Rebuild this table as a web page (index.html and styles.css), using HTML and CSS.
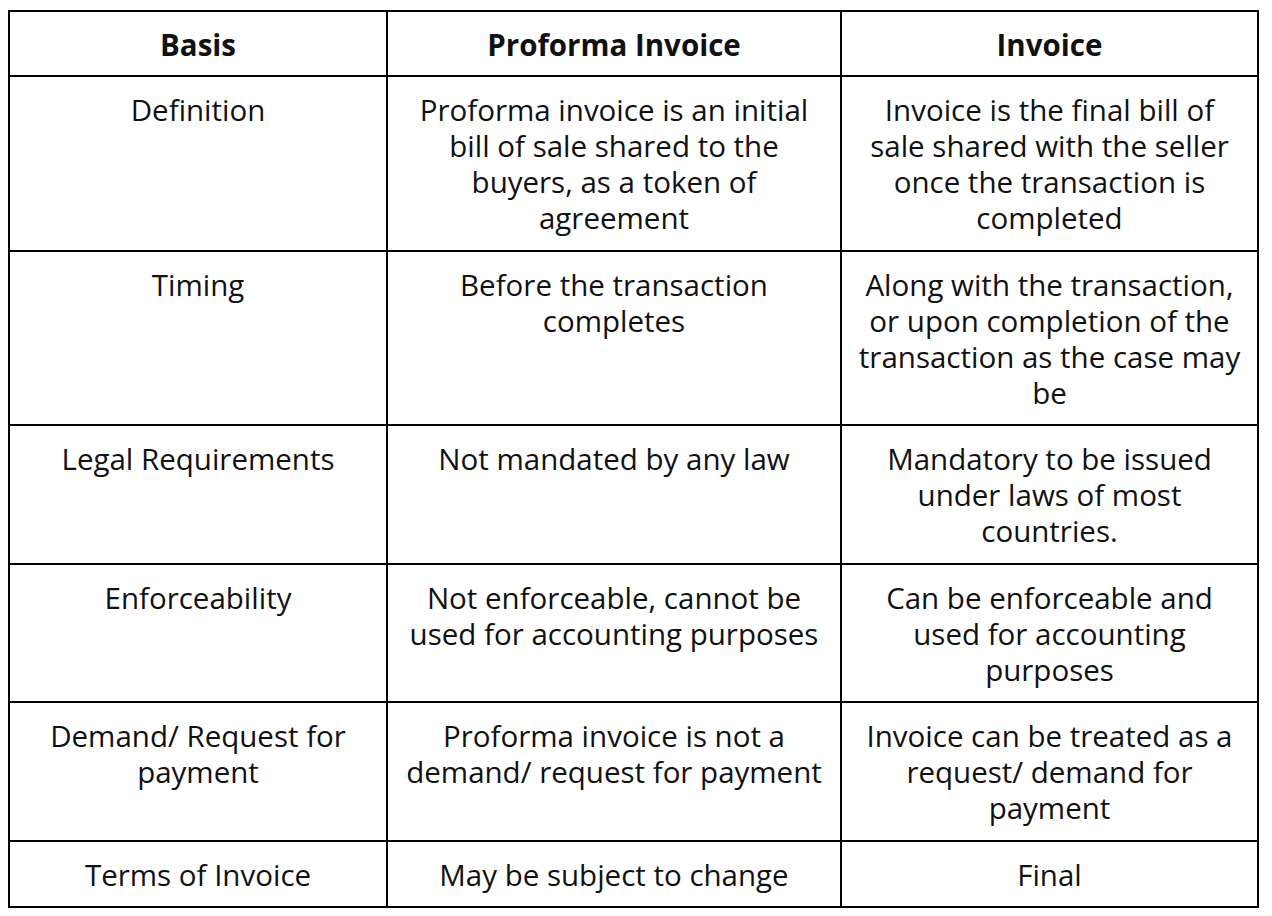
FILE: index.html
```html
<!DOCTYPE html>
<html>
<head>
<meta charset="utf-8">
<link rel="stylesheet" href="styles.css">
</head>
<body>
<table class="cmp">
  <colgroup>
    <col class="c1">
    <col class="c2">
    <col class="c3">
  </colgroup>
  <thead>
    <tr><th>Basis</th><th>Proforma Invoice</th><th>Invoice</th></tr>
  </thead>
  <tbody>
    <tr><td>Definition</td><td>Proforma invoice is an initial bill of sale shared to the buyers, as a token of agreement</td><td>Invoice is the final bill of sale shared with the seller once the transaction is completed</td></tr>
    <tr><td>Timing</td><td>Before the transaction completes</td><td>Along with the transaction, or upon completion of the transaction as the case may be</td></tr>
    <tr><td>Legal Requirements</td><td>Not mandated by any law</td><td>Mandatory to be issued under laws of most countries.</td></tr>
    <tr><td>Enforceability</td><td>Not enforceable, cannot be used for accounting purposes</td><td>Can be enforceable and used for accounting purposes</td></tr>
    <tr><td>Demand/ Request for payment</td><td>Proforma invoice is not a demand/ request for payment</td><td>Invoice can be treated as a request/ demand for payment</td></tr>
    <tr><td>Terms of Invoice</td><td>May be subject to change</td><td>Final</td></tr>
  </tbody>
</table>
</body>
</html>
```
FILE: styles.css
```css
body {
  margin: 10px 8px;
  background: #fff;
  font-family: "Open Sans", "Noto Sans", sans-serif;
  color: #111;
}
.cmp {
  border-collapse: collapse;
  width: 1249px;
  table-layout: fixed;
  font-size: 29.5px;
  line-height: 36px;
}
.c1 { width: 378px; }
.c2 { width: 454px; }
.c3 { width: 417px; }
.cmp th, .cmp td {
  border: 2px solid #000;
  text-align: center;
  vertical-align: top;
  padding: 15px 16px 12px;
}
.cmp td { padding-bottom: 13.5px; }
.cmp th { font-weight: 700; }
```
